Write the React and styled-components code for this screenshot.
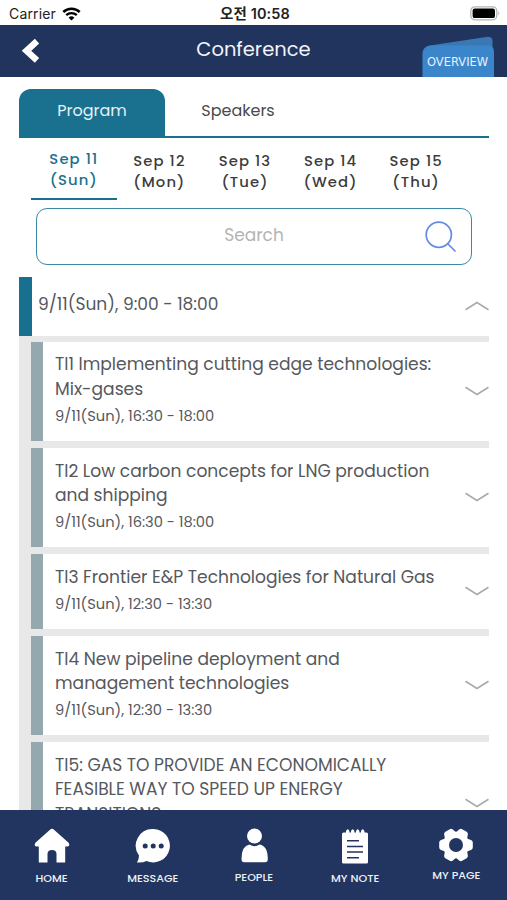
import React, { useState } from "react";
import styled, { createGlobalStyle } from "styled-components";

const days = [
  { date: "Sep 11", day: "(Sun)" },
  { date: "Sep 12", day: "(Mon)" },
  { date: "Sep 13", day: "(Tue)" },
  { date: "Sep 14", day: "(Wed)" },
  { date: "Sep 15", day: "(Thu)" },
];

const sessions = [
  {
    lines: ["TI1 Implementing cutting edge technologies:", "Mix-gases"],
    time: "9/11(Sun), 16:30 - 18:00",
  },
  {
    lines: ["TI2 Low carbon concepts for LNG production", "and shipping"],
    time: "9/11(Sun), 16:30 - 18:00",
  },
  {
    lines: ["TI3 Frontier E&P Technologies for Natural Gas"],
    time: "9/11(Sun), 12:30 - 13:30",
  },
  {
    lines: ["TI4 New pipeline deployment and", "management technologies"],
    time: "9/11(Sun), 12:30 - 13:30",
  },
  {
    lines: [
      "TI5: GAS TO PROVIDE AN ECONOMICALLY",
      "FEASIBLE WAY TO SPEED UP ENERGY",
      "TRANSITIONS",
    ],
    time: "9/11(Sun), 12:30 - 13:30",
  },
];

const Chevron = ({ up }) => (
  <ChevronIcon viewBox="0 0 24 10">
    <path d={up ? "M0.5 8.8 L12 1.5 L23.5 8.8" : "M0.5 1.2 L12 8.5 L23.5 1.2"} />
  </ChevronIcon>
);

const HomeIcon = () => (
  <svg width="36" height="36" viewBox="0 0 36 36" fill="#fff">
    <path d="M18 0.8 Q19 0.8 20 1.8 L34.6 14.8 Q36.4 18.4 33.5 18.6 H31.2 V34.6 H22.5 V26 Q22.5 22 18 22 Q13.5 22 13.5 26 V34.6 H4.8 V18.6 H2.5 Q-0.4 18.4 1.4 14.8 L16 1.8 Q17 0.8 18 0.8 Z" />
  </svg>
);

const MessageIcon = () => (
  <svg width="36" height="36" viewBox="0 0 36 36">
    <path
      d="M18.5 1 A16.7 16.7 0 1 1 11.5 33 Q7.5 35 2 34.5 Q4 31.5 4 27.5 A16.7 16.7 0 0 1 18.5 1 Z"
      fill="#fff"
    />
    <g fill="#213560">
      <circle cx="10.2" cy="18" r="2.5" />
      <circle cx="18.2" cy="18" r="2.5" />
      <circle cx="26.2" cy="18" r="2.5" />
    </g>
  </svg>
);

const PeopleIcon = () => (
  <svg width="36" height="36" viewBox="0 0 36 36" fill="#fff">
    <circle cx="18.5" cy="8" r="7.5" />
    <path d="M5.5 31 Q5.5 18 13.5 16.6 Q18.5 19.8 23.5 16.6 Q31.8 18 31.8 31 Q31.8 34.3 29 34.3 H8.3 Q5.5 34.3 5.5 31 Z" />
  </svg>
);

const NoteIcon = () => (
  <svg width="36" height="36" viewBox="0 0 36 36">
    <path
      d="M6.5 4.5 H9 V3 Q10.7 -0.5 12.4 3 V4.5 H14 V3 Q15.7 -0.5 17.4 3 V4.5 H19 V3 Q20.7 -0.5 22.4 3 V4.5 H24 V3 Q25.7 -0.5 27.4 3 V4.5 H29.5 Q31 4.5 31 6 V34 Q31 35.5 29.5 35.5 H6.5 Q5 35.5 5 34 V6 Q5 4.5 6.5 4.5 Z"
      fill="#fff"
    />
    <path
      d="M10 12.7 H22 M10 18.4 H26 M10 24.1 H26 M10 29.8 H22"
      stroke="#213560"
      strokeWidth="1.5"
    />
  </svg>
);

const GearIcon = () => (
  <svg width="36" height="36" viewBox="0 0 36 36">
    <g fill="#fff">
      <circle cx="18" cy="17" r="13.2" />
      {[30, 90, 150, 210, 270, 330].map((angle) => (
        <path
          key={angle}
          d="M11.2 7 L13 2 Q13.6 0.2 15.4 0.2 H20.6 Q22.4 0.2 23 2 L24.8 7 Z"
          transform={`rotate(${angle} 18 17)`}
        />
      ))}
    </g>
    <circle cx="18" cy="17" r="7" fill="#213560" />
  </svg>
);

const navItems = [
  { label: "HOME", icon: <HomeIcon />, gap: 7 },
  { label: "MESSAGE", icon: <MessageIcon />, gap: 7 },
  { label: "PEOPLE", icon: <PeopleIcon />, gap: 6 },
  { label: "MY NOTE", icon: <NoteIcon />, gap: 7 },
  { label: "MY PAGE", icon: <GearIcon />, gap: 4.5 },
];

const App = () => {
  const [activeDay, setActiveDay] = useState(0);
  const [open, setOpen] = useState(true);

  return (
    <>
      <GlobalStyle />
      <Screen>
        <StatusBar>
          <Carrier>
            Carrier
            <svg width="19" height="14" viewBox="0 0 19 14" fill="none" stroke="#000">
              <path d="M1.3 5 A11.8 11.8 0 0 1 17.7 5" strokeWidth="2.5" />
              <path d="M4.2 8.2 A7.8 7.8 0 0 1 14.8 8.2" strokeWidth="2.4" />
              <path d="M9.5 13.6 L6.6 10.7 A4.2 4.2 0 0 1 12.4 10.7 Z" fill="#000" stroke="none" />
            </svg>
          </Carrier>
          <Clock>오전 10:58</Clock>
          <Battery>
            <svg width="31" height="15" viewBox="0 0 31 15">
              <rect x="0.8" y="0.8" width="26" height="13" rx="4" fill="#fff" stroke="#b4b4b4" strokeWidth="1.3" />
              <rect x="2.6" y="2.5" width="22.4" height="9.6" rx="2.2" fill="#000" />
              <path d="M28.4 5 Q30.4 7.3 28.4 9.6 Z" fill="#b4b4b4" />
            </svg>
          </Battery>
        </StatusBar>

        <Header>
          <BackButton aria-label="Back">
            <svg width="19" height="26" viewBox="0 0 19 26">
              <path d="M16 3.2 L5.5 12.8 L16 22.4" fill="none" stroke="#fff" strokeWidth="6.4" />
            </svg>
          </BackButton>
          <Title>Conference</Title>
          <Overview>
            <svg width="73" height="41" viewBox="0 0 73 41">
              <path d="M8 9.5 L64 0.9 Q70.5 0.1 70.5 5 V16 H8 Z" fill="#3a78b4" />
              <path d="M0.5 41 V17 Q1 10.5 8 9.5 H66 Q72 9.5 72 16 V41 Z" fill="#3b86cb" />
            </svg>
            <span>OVERVIEW</span>
          </Overview>
        </Header>

        <Content>
          <Tabs>
            <Tab $active>Program</Tab>
            <Tab>Speakers</Tab>
          </Tabs>

          <Days>
            {days.map(({ date, day }, index) => (
              <Day
                key={date}
                $active={index === activeDay}
                onClick={() => setActiveDay(index)}
              >
                <span>{date}</span>
                <span>{day}</span>
              </Day>
            ))}
          </Days>

          <SearchBox>
            <input placeholder="Search" />
            <svg width="32" height="32" viewBox="0 0 32 32" fill="none" stroke="#648be0" strokeWidth="1.7">
              <circle cx="13.8" cy="13.8" r="12.6" />
              <path d="M22.5 22.5 L30.5 30.5" />
            </svg>
          </SearchBox>

          <Group onClick={() => setOpen(!open)}>
            <GroupTitle>9/11(Sun), 9:00 - 18:00</GroupTitle>
            <Chevron up={open} />
          </Group>
          {open && (
            <SessionList>
              {sessions.map(({ lines, time }) => (
                <Session key={lines[0]}>
                  <div>
                    {lines.map((line) => (
                      <SessionTitle key={line}>{line}</SessionTitle>
                    ))}
                    <SessionTime>{time}</SessionTime>
                  </div>
                  <Chevron />
                </Session>
              ))}
            </SessionList>
          )}
        </Content>

        <BottomNav>
          {navItems.map(({ label, icon, gap }) => (
            <NavItem key={label} $gap={gap}>
              {icon}
              <span>{label}</span>
            </NavItem>
          ))}
        </BottomNav>
      </Screen>
    </>
  );
};

const GlobalStyle = createGlobalStyle`
  * {
    box-sizing: border-box;
  }
  body {
    margin: 0;
    background: #fff;
    font-family: Poppins, Inter, "Noto Sans CJK KR", sans-serif;
    color: #55585d;
  }
  button {
    border: none;
    background: none;
    padding: 0;
    font-family: inherit;
  }
  svg {
    display: block;
    flex-shrink: 0;
  }
`;

const Screen = styled.div`
  display: flex;
  flex-direction: column;
  width: 507px;
  height: 900px;
  overflow: hidden;
  background: #fff;
`;

const StatusBar = styled.div`
  display: grid;
  grid-template-columns: 1fr auto 1fr;
  align-items: center;
  flex-shrink: 0;
  height: 25px;
  padding: 2px 6px 0 9px;
  color: #222;
  font-family: Inter, "Noto Sans CJK KR", sans-serif;
`;

const Carrier = styled.div`
  display: flex;
  align-items: center;
  gap: 6px;
  font-size: 14px;
  letter-spacing: 0.15px;
`;

const Clock = styled.div`
  font-size: 14.5px;
  font-weight: 600;
  line-height: 20px;
  letter-spacing: 0.1px;
  white-space: nowrap;
`;

const Battery = styled.div`
  justify-self: end;
`;

const Header = styled.header`
  display: grid;
  grid-template-columns: 85px 1fr 85px;
  flex-shrink: 0;
  height: 52px;
  background: #20345e;
`;

const BackButton = styled.button`
  display: flex;
  align-items: center;
  padding-left: 21px;
`;

const Title = styled.h1`
  margin: 0;
  color: #f2f4f8;
  font-size: 19.5px;
  font-weight: 400;
  line-height: 49px;
  text-align: center;
`;

const Overview = styled.div`
  position: relative;
  align-self: end;
  span {
    position: absolute;
    left: 5px;
    top: 18px;
    color: #e6f1fb;
    font-family: "DejaVu Sans", sans-serif;
    font-size: 11.5px;
    line-height: 16px;
  }
`;

const Content = styled.main`
  display: flex;
  flex-direction: column;
  flex: 1;
  min-height: 0;
  overflow: hidden;
  padding: 12px 18px 0 19px;
`;

const Tabs = styled.div`
  display: flex;
  flex-shrink: 0;
  height: 48.5px;
  border-bottom: 2.5px solid #19708f;
`;

const Tab = styled.button`
  width: 146px;
  height: 46.5px;
  padding-bottom: 4px;
  border-radius: 12px 12px 0 0;
  background: ${(props) => (props.$active ? "#19708f" : "transparent")};
  color: ${(props) => (props.$active ? "#e3f2f6" : "#4a4a4a")};
  font-size: 16px;
`;

const Days = styled.div`
  display: grid;
  grid-template-columns: repeat(5, 85.6px);
  flex-shrink: 0;
  height: 62.5px;
  padding-left: 12px;
`;

const Day = styled.button`
  display: flex;
  flex-direction: column;
  align-items: center;
  padding-top: ${(props) => (props.$active ? "10.5px" : "12px")};
  border-bottom: 2.5px solid
    ${(props) => (props.$active ? "#19708f" : "transparent")};
  color: ${(props) => (props.$active ? "#19708f" : "#3c3c3c")};
  font-size: 14.8px;
  font-weight: 500;
  line-height: 21px;
  letter-spacing: 1.1px;
`;

const SearchBox = styled.div`
  display: flex;
  align-items: center;
  flex-shrink: 0;
  height: 57px;
  margin: 8px 17px 12px;
  padding: 0 14px 0 46px;
  border: 1.5px solid #3a8aa6;
  border-radius: 11px;
  input {
    flex: 1;
    min-width: 0;
    padding: 0 0 3.5px;
    border: none;
    outline: none;
    font-family: inherit;
    font-size: 17px;
    text-align: center;
  }
  input::placeholder {
    color: #b4b4b4;
    opacity: 1;
  }
`;

const Group = styled.div`
  display: flex;
  align-items: center;
  justify-content: space-between;
  flex-shrink: 0;
  height: 58.5px;
  padding-left: 6px;
  border-left: 13px solid #17708f;
`;

const GroupTitle = styled.div`
  padding-bottom: 4px;
  font-size: 17.05px;
  white-space: nowrap;
`;

const SessionList = styled.div`
  display: flex;
  flex-direction: column;
  gap: 6.8px;
  padding: 6.2px 0 0 12px;
  background: #e8e8e8;
`;

const Session = styled.div`
  display: flex;
  align-items: center;
  justify-content: space-between;
  padding: 10.7px 0 13.9px 12px;
  border-left: 12px solid #95a8ad;
  background: #fff;
  > svg {
    margin-top: 1.5px;
  }
`;

const SessionTitle = styled.div`
  font-size: 17.1px;
  line-height: 24.4px;
  white-space: nowrap;
`;

const SessionTime = styled.div`
  margin-top: 4px;
  font-size: 14.65px;
  line-height: 22px;
`;

const ChevronIcon = styled.svg`
  width: 24px;
  height: 10px;
  fill: none;
  stroke: #ababab;
  stroke-width: 1.7;
`;

const BottomNav = styled.nav`
  display: grid;
  grid-template-columns: repeat(5, 101.2px);
  flex-shrink: 0;
  height: 90px;
  padding: 17.5px 0 0 1px;
  background: #213560;
`;

const NavItem = styled.div`
  display: flex;
  flex-direction: column;
  align-items: center;
  gap: ${(props) => props.$gap}px;
  color: #eef1f6;
  font-size: 11.1px;
  font-weight: 500;
  line-height: 14px;
`;

export default App;
